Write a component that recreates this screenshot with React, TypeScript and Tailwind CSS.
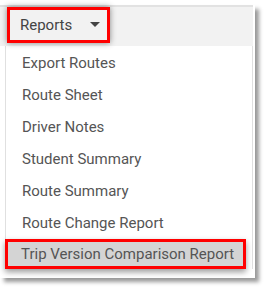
const items = [
  'Export Routes',
  'Route Sheet',
  'Driver Notes',
  'Student Summary',
  'Route Summary',
  'Route Change Report',
]

export default function App() {
  return (
    <div className="w-[265px] h-[289px] bg-white pt-[5px] font-['Roboto',sans-serif] overflow-hidden">
      <div className="w-[255px] h-[273px] bg-white pr-[2px] shadow-[4px_4px_4px_rgba(0,0,0,0.4)]">
        <div className="h-[41px] bg-[#f2f2f2] border-t-2 border-[#e2e2e2] flex items-start pl-[7px] pt-[0px]">
          <div className="mt-[0px] w-[103px] h-[36px] border-[3px] border-[#ff0000] shadow-[0_0_6px_rgba(0,0,0,0.45)] flex items-center pl-[10px] gap-[18px]">
            <span className="text-[15px] text-[#444]">Reports</span>
            <svg width="10" height="6" viewBox="0 0 10 6">
              <path d="M0 0 L10 0 L5 5 Z" fill="#444" />
            </svg>
          </div>
        </div>
        <div className="ml-[5px] w-[248px] border-l border-r border-[#e0e0e0] pt-px">
          {items.map((t) => (
            <div key={t} className="h-[32px] flex items-center pl-[16px] text-[15px] text-[#555]">
              {t}
            </div>
          ))}
          <div className="-ml-[1px] w-[241px] h-[30px] border-[3px] border-[#ff0000] bg-[#d4d4d4] shadow-[0_3px_6px_rgba(0,0,0,0.4)] flex items-center pl-[13px] text-[15px] text-[#555]">
            Trip Version Comparison Report
          </div>
        </div>
      </div>
    </div>
  )
}
